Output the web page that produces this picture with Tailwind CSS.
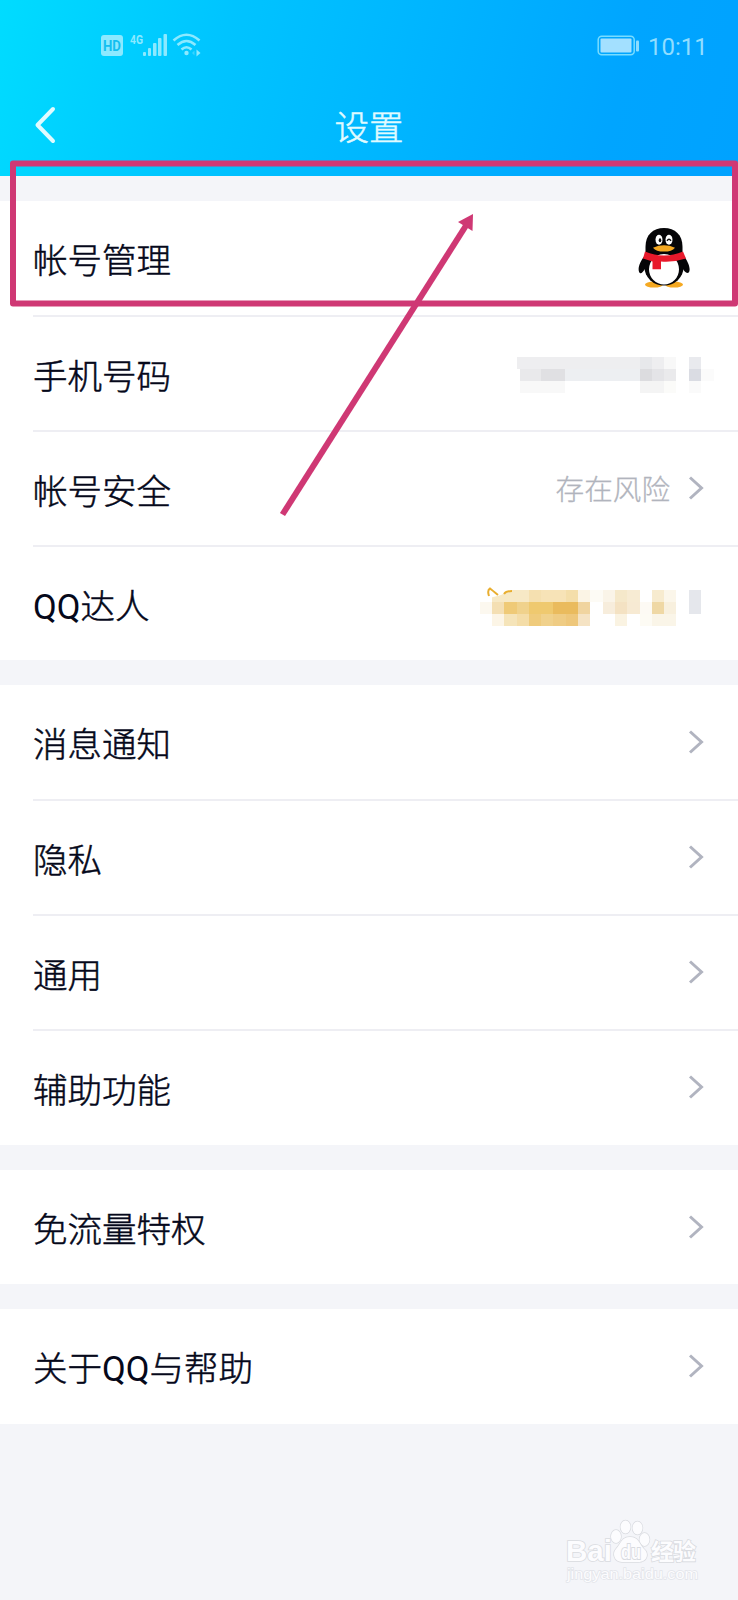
<!DOCTYPE html>
<html lang="zh-CN">
<head>
<meta charset="utf-8">
<title>设置</title>
<script src="https://cdn.jsdelivr.net/npm/@tailwindcss/browser@4"></script>
</head>
<body class="bg-[#f4f5f9]">
<div class="relative w-[738px] h-[1600px] overflow-hidden bg-[#f4f5f9] font-['Roboto','Noto_Sans_CJK_SC',sans-serif] font-light text-[#05081a] text-[34.5px]">
  <header class="h-[176px] flex flex-col bg-[linear-gradient(105deg,#00dcff_0%,#00c4ff_30%,#00b2ff_60%,#00a5ff_82%,#00a2ff_100%)]">
    <div class="h-[90px] pl-[100px] pr-[32px] pt-[1px] flex items-center justify-between text-[#8ce9ff]">
      <svg width="104" height="32" viewBox="0 0 104 32" fill="currentColor">
        <rect x="1" y="5" width="22" height="21" rx="3"/>
        <text x="12" y="21" text-anchor="middle" font-family="Roboto" font-size="15" font-weight="700" fill="#14bff0" textLength="18" lengthAdjust="spacingAndGlyphs">HD</text>
        <text x="30" y="13.500" font-family="Roboto" font-size="13.500" font-weight="700" textLength="13" lengthAdjust="spacingAndGlyphs">4G</text>
        <rect x="43" y="22" width="3" height="4" rx="1"/><rect x="48" y="18" width="3" height="8" rx="1"/><rect x="53" y="13" width="3.500" height="13" rx="1"/><rect x="58" y="8" width="3.500" height="18" rx="1"/><rect x="63.500" y="4" width="3.500" height="22" rx="1"/>
        <g fill="none" stroke="currentColor" stroke-width="2.600"><path d="M73.500 10.500Q86.500-1 99.500 10.500M77.500 15Q86.500 7 95.500 15M81.500 19.500Q86.500 15 91.500 19.500"/></g>
        <circle cx="86.500" cy="23" r="2.200"/><path d="M96.500 19.500l4 3.500-4 3.500z"/><path d="M94.500 20.500v5l-2.500-2.500z" opacity=".4"/>
      </svg>
      <div class="flex items-center gap-[8px] pt-[1px]">
        <svg width="43" height="22" viewBox="0 0 43 22" fill="none"><rect x="1.200" y="1.200" width="36" height="18.600" rx="3.500" stroke="#78dcff" stroke-width="1.500"/><rect x="3.500" y="3.500" width="31" height="14" rx="1" fill="#a3e0ff"/><rect x="39" y="5.500" width="3" height="11" rx="1" fill="#8cdcff"/></svg>
        <span class="text-[24px] leading-none font-normal text-[#91ddff] w-[58px] pt-[1px] text-center whitespace-nowrap">10:11</span>
      </div>
    </div>
    <div class="h-[86px] pb-[14px] grid grid-cols-[1fr_auto_1fr] items-center text-[#e0fbff]">
      <svg class="ml-[34px] mt-[-2px]" width="24" height="40" viewBox="0 0 24 40" fill="none" stroke="currentColor" stroke-width="4" stroke-linecap="round" stroke-linejoin="round"><path d="M19 4L3.500 20L19 36"/></svg>
      <h1 class="leading-none pt-[4px] [-webkit-text-stroke:0.5px]">设置</h1>
    </div>
  </header>

  <main class="pt-[25px] flex flex-col gap-[25px]">
    <section class="bg-white">
      <div class="h-[114px] pl-[33px] pr-[48px] flex items-center justify-between">
        <span class="pt-[8px] [-webkit-text-stroke:0.5px]">帐号管理</span>
        <svg width="52" height="61" viewBox="0 0 52 62" preserveAspectRatio="none" class="mt-[-2px]">
          <ellipse cx="16" cy="58.500" rx="9" ry="3" fill="#f5a922"/><ellipse cx="36" cy="58.500" rx="9" ry="3" fill="#f5a922"/>
          <path d="M7 29C1 36-1 44 2 47Q4 48 8 41L44 41Q48 49 51 46C53 42 50 35 45 28Z" fill="#050507"/>
          <ellipse cx="26" cy="41" rx="19.500" ry="18.500" fill="#050507"/>
          <path d="M7.500 29V20C7.500 8 15 1 26 1S44.500 8 44.500 20V29Z" fill="#050507"/>
          <ellipse cx="26" cy="43" rx="15" ry="15.500" fill="#fff"/>
          <ellipse cx="21" cy="13" rx="3.500" ry="5" fill="#fff"/><ellipse cx="31" cy="13" rx="3.500" ry="5" fill="#fff"/>
          <ellipse cx="22" cy="13.500" rx="1.300" ry="2" fill="#111"/><path d="M29 14Q31 11 33 14" fill="none" stroke="#111" stroke-width="1.400"/>
          <path d="M15 21Q26 16 37 21Q34 25 26 25T15 21Z" fill="#f5a922"/>
          <path d="M7 25Q26 33 45 25L48 32Q36 36 23 35V43H14.500V35L5 32Z" fill="#e8192b"/>
        </svg>
      </div>
      <div class="h-[115px] ml-[33px] flex items-center justify-between border-t-2 border-[#eeeef3]">
        <span class="pt-[8px] [-webkit-text-stroke:0.5px]">手机号码</span>
        <svg class="mt-[3px]" width="222" height="37" viewBox="0 0 222 37" shape-rendering="crispEdges">
          <path d="M1 0H148V12H1z" fill="#eeeef0"/><path d="M4 12H25V24H4z" fill="#e9e9eb"/><path d="M25 12H49V24H25z" fill="#e0e0e3"/><path d="M49 12H124V24H49z" fill="#edeff2"/><path d="M4 24H49V36H4z" fill="#f8f8f8"/>
          <path d="M124 0H136V12H124z" fill="#e7e8eb"/><path d="M124 12H136V24H124z" fill="#dcdcdf"/><path d="M136 12H148V24H136z" fill="#e4e4e7"/><path d="M148 0H160V12H148z" fill="#f8f8f8"/><path d="M148 12H160V24H148z" fill="#eaeaec"/><path d="M124 24H148V36H124z" fill="#f4f4f4"/><path d="M148 24H160V36H148z" fill="#fbfbf9"/>
          <path d="M173 0H185V12H173z" fill="#e9eaee"/><path d="M173 12H185V24H173z" fill="#dadce3"/><path d="M173 24H185V36H173z" fill="#fafafa"/><path d="M185 12H198V24H185z" fill="#fbfbfb"/>
        </svg>
      </div>
      <div class="h-[115px] ml-[33px] pr-[33px] flex items-center justify-between border-t-2 border-[#eeeef3]">
        <span class="pt-[8px] [-webkit-text-stroke:0.5px]">帐号安全</span>
        <div class="flex items-center gap-[18px] text-[#b1b4bd]"><span class="text-[28.600px] pt-[4px] [-webkit-text-stroke:0.3px]">存在风险</span><svg width="17" height="26" viewBox="0 0 17 26" fill="none" stroke="#b1b4c0" stroke-width="3"><path d="M2 2.500L13.500 13L2 23.500"/></svg></div>
      </div>
      <div class="h-[115px] ml-[33px] flex items-center justify-between border-t-2 border-[#eeeef3]">
        <span class="pt-[8px] [-webkit-text-stroke:0.5px]"><span class="font-normal [-webkit-text-stroke:0px]">QQ</span>达人</span>
        <svg class="mt-[5px]" width="258" height="42" viewBox="0 0 258 42">
          <g shape-rendering="crispEdges">
          <path d="M12 5H49V17H12z" fill="#f7e9c6"/><path d="M49 5H61V17H49z" fill="#f5e0b0"/><path d="M61 5H86V17H61z" fill="#f7e3b7"/><path d="M86 5H98V17H86z" fill="#f4deaa"/><path d="M98 5H110V17H98z" fill="#fbf4e5"/><path d="M110 5H123V17H110z" fill="#fdfbf5"/><path d="M123 5H135V17H123z" fill="#faf4e8"/><path d="M135 5H147V17H135z" fill="#f5e8ca"/><path d="M147 5H160V17H147z" fill="#f7ebd3"/><path d="M172 5H184V17H172z" fill="#f7ebcf"/><path d="M184 5H196V17H184z" fill="#fbf6ea"/>
          <path d="M0 17H12V29H0z" fill="#fcf8ef"/><path d="M12 17H24V29H12z" fill="#f4dfb3"/><path d="M24 17H37V29H24z" fill="#efca77"/><path d="M37 17H49V29H37z" fill="#f0d28c"/><path d="M49 17H73V29H49z" fill="#efc96f"/><path d="M73 17H98V29H73z" fill="#eabb5d"/><path d="M98 17H110V29H98z" fill="#f0d49f"/><path d="M123 17H135V29H123z" fill="#f7eddc"/><path d="M135 17H147V29H135z" fill="#f4e2c3"/><path d="M147 17H160V29H147z" fill="#f7ead3"/><path d="M160 17H172V29H160z" fill="#fdfaf4"/><path d="M172 17H184V29H172z" fill="#efd8a5"/><path d="M184 17H196V29H184z" fill="#f8f0de"/>
          <path d="M12 29H24V41H12z" fill="#fcf5e6"/><path d="M24 29H37V41H24z" fill="#f5e4b9"/><path d="M37 29H49V41H37z" fill="#f4dda8"/><path d="M49 29H61V41H49z" fill="#efcb7c"/><path d="M61 29H73V41H61z" fill="#f0d18c"/><path d="M73 29H86V41H73z" fill="#efcc84"/><path d="M86 29H98V41H86z" fill="#eec77b"/><path d="M98 29H110V41H98z" fill="#f5e3c4"/><path d="M135 29H147V41H135z" fill="#faf3e2"/><path d="M172 29H196V41H172z" fill="#faf5e8"/><path d="M160 29H172V41H160z" fill="#fdfbf4"/>
          <path d="M209 5H221V29H209z" fill="#e5e7ec"/></g>
          <path d="M0 16Q12 12 21 10L33 4H12V0H0z" fill="#fff"/>
          <path d="M9 11Q7 5 10 3.500Q12 5 18 10M24 9Q26 6 32 6" fill="none" stroke="#e9ae2f" stroke-width="2"/>
        </svg>
      </div>
    </section>

    <section class="bg-white">
      <div class="h-[114px] pl-[33px] pr-[33px] flex items-center justify-between"><span class="pt-[8px] [-webkit-text-stroke:0.5px]">消息通知</span><svg width="17" height="26" viewBox="0 0 17 26" fill="none" stroke="#b1b4c0" stroke-width="3"><path d="M2 2.500L13.500 13L2 23.500"/></svg></div>
      <div class="h-[115px] ml-[33px] pr-[33px] flex items-center justify-between border-t-2 border-[#eeeef3]"><span class="pt-[8px] [-webkit-text-stroke:0.5px]">隐私</span><svg class="mt-[-2px]" width="17" height="26" viewBox="0 0 17 26" fill="none" stroke="#b1b4c0" stroke-width="3"><path d="M2 2.500L13.500 13L2 23.500"/></svg></div>
      <div class="h-[115px] ml-[33px] pr-[33px] flex items-center justify-between border-t-2 border-[#eeeef3]"><span class="pt-[8px] [-webkit-text-stroke:0.5px]">通用</span><svg class="mt-[-2px]" width="17" height="26" viewBox="0 0 17 26" fill="none" stroke="#b1b4c0" stroke-width="3"><path d="M2 2.500L13.500 13L2 23.500"/></svg></div>
      <div class="h-[116px] ml-[33px] pr-[33px] flex items-center justify-between border-t-2 border-[#eeeef3]"><span class="pt-[7px] [-webkit-text-stroke:0.5px]">辅助功能</span><svg class="mt-[-2px]" width="17" height="26" viewBox="0 0 17 26" fill="none" stroke="#b1b4c0" stroke-width="3"><path d="M2 2.500L13.500 13L2 23.500"/></svg></div>
    </section>

    <section class="bg-white h-[114px] px-[33px] flex items-center justify-between"><span class="pt-[8px] [-webkit-text-stroke:0.5px]">免流量特权</span><svg width="17" height="26" viewBox="0 0 17 26" fill="none" stroke="#b1b4c0" stroke-width="3"><path d="M2 2.500L13.500 13L2 23.500"/></svg></section>
    <section class="bg-white h-[115px] px-[33px] flex items-center justify-between"><span class="pt-[6px] [-webkit-text-stroke:0.5px]">关于<span class="font-normal [-webkit-text-stroke:0px]">QQ</span>与帮助</span><svg class="mt-[-2px]" width="17" height="26" viewBox="0 0 17 26" fill="none" stroke="#b1b4c0" stroke-width="3"><path d="M2 2.500L13.500 13L2 23.500"/></svg></section>
  </main>

  <!-- Highlight frame and arrow -->
  <svg class="absolute inset-0" width="738" height="1600" viewBox="0 0 738 1600" fill="none">
    <rect x="13" y="163.500" width="722" height="140" stroke="#cf3874" stroke-width="6" stroke-linejoin="round"/>
    <path d="M282.500 514.500L467 224" stroke="#cf3874" stroke-width="6"/>
    <path d="M473 214L458 222L472.500 231Z" fill="#cf3874"/>
  </svg>

  <!-- Watermark -->
  <svg class="absolute left-[560px] top-[1515px]" width="145" height="70" viewBox="0 0 145 70" fill="#fcfcfe" stroke="#d9dbe0" stroke-width="1.600" paint-order="stroke">
    <text x="6" y="46" font-family="Liberation Sans" font-weight="700" font-size="29" textLength="46" lengthAdjust="spacingAndGlyphs">Bai</text>
    <g stroke-width="1.400"><ellipse cx="56" cy="21.500" rx="5" ry="6.500"/><ellipse cx="65.500" cy="12" rx="5" ry="6.500"/><ellipse cx="77.500" cy="13" rx="5" ry="6.500"/><ellipse cx="84.500" cy="24.500" rx="5" ry="6.500"/><path d="M70 22C61 22 61 29 56 34C52 38 54 47 62 47H78C88 47 89 38 84 34C79 29 79 22 70 22Z"/></g>
    <text x="61" y="44" font-family="Liberation Sans" font-weight="700" font-size="21" textLength="20" lengthAdjust="spacingAndGlyphs" stroke-width="2">du</text>
    <text x="91" y="45" font-family="Noto Sans CJK SC" font-weight="700" font-size="23" textLength="45">经验</text>
    <text x="7" y="64" font-family="Liberation Sans" font-size="15.500" textLength="131" lengthAdjust="spacingAndGlyphs" stroke="#e2e4e9" stroke-width="1.400">jingyan.baidu.com</text>
  </svg>
</div>
</body>
</html>
